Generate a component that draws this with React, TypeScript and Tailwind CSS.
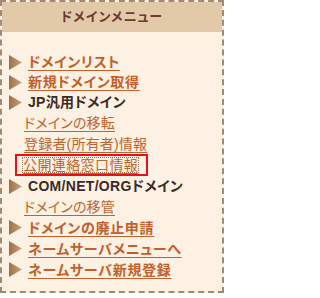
import React from 'react';

// Small brown arrow shown before the main menu entries
const Arrow = () => (
  <svg width="13" height="15" viewBox="0 0 13 15" className="shrink-0">
    <defs>
      <linearGradient id="arrowFill" x1="0" y1="0" x2="1" y2="0">
        <stop offset="0" stopColor="#9c7148" />
        <stop offset="1" stopColor="#c9a47e" />
      </linearGradient>
    </defs>
    <polygon points="0,0 13,7.5 0,15" fill="url(#arrowFill)" />
  </svg>
);

type Item =
  | { kind: 'link'; label: string; h: string }
  | { kind: 'head'; label: string; h: string }
  | { kind: 'sub'; label: string; h: string; active?: boolean };

const items: Item[] = [
  { kind: 'link', label: 'ドメインリスト', h: 'h-[20px]' },
  { kind: 'link', label: '新規ドメイン取得', h: 'h-[20px]' },
  { kind: 'head', label: 'JP汎用ドメイン', h: 'h-[20px]' },
  { kind: 'sub', label: 'ドメインの移転', h: 'h-[21px]' },
  { kind: 'sub', label: '登録者(所有者)情報', h: 'h-[21px]' },
  { kind: 'sub', label: '公開連絡窓口情報', h: 'h-[22px]', active: true },
  { kind: 'head', label: 'COM/NET/ORGドメイン', h: 'h-[20px]' },
  { kind: 'sub', label: 'ドメインの移管', h: 'h-[21px]' },
  { kind: 'link', label: 'ドメインの廃止申請', h: 'h-[21px]' },
  { kind: 'link', label: 'ネームサーバメニューへ', h: 'h-[21px]' },
  { kind: 'link', label: 'ネームサーバ新規登録', h: 'h-[21px]' },
];

const App = () => {
  return (
    <div className="w-[226px] h-[298px] bg-white font-['Liberation_Sans','Noto_Sans_CJK_JP',sans-serif] [font-feature-settings:'palt']">
      <div className="w-[224px] border-2 border-dashed border-[#a08a72] bg-[#fdf1e4]">
        {/* Header */}
        <div className="h-[30px] bg-[#e2caa9] flex items-center justify-center text-[13px] font-bold text-[#6b3b36] tracking-[1px]">
          ドメインメニュー
        </div>

        {/* Menu */}
        <ul className="pt-[20px] pb-[11px] text-[14px] leading-none">
          {items.map((item, i) => {
            if (item.kind === 'sub') {
              if (item.active) {
                return (
                  <li key={i} className={`${item.h} flex items-center pl-[13px]`}>
                    <span className="h-[22px] flex items-center border-2 border-[#e8101a] pl-[6px] pr-[8px]">
                      <a href="#" className="text-[#c0652f] tracking-[0.4px] underline underline-offset-[3px] outline-1 outline-dotted outline-[#a0704a]">
                        {item.label}
                      </a>
                    </span>
                  </li>
                );
              }
              return (
                <li key={i} className={`${item.h} flex items-center pl-[22px]`}>
                  <a href="#" className="text-[#c0652f] tracking-[0.2px] underline underline-offset-[3px]">
                    {item.label}
                  </a>
                </li>
              );
            }
            return (
              <li key={i} className={`${item.h} flex items-center gap-[6px] pl-[7px]`}>
                <Arrow />
                {item.kind === 'link' ? (
                  <a href="#" className="font-bold text-[#c4602b] tracking-[0.7px] underline underline-offset-[3px]">
                    {item.label}
                  </a>
                ) : (
                  <span className="font-bold text-[#3c2a26] tracking-[0.3px]">{item.label}</span>
                )}
              </li>
            );
          })}
        </ul>
      </div>
    </div>
  );
};

export default App;
